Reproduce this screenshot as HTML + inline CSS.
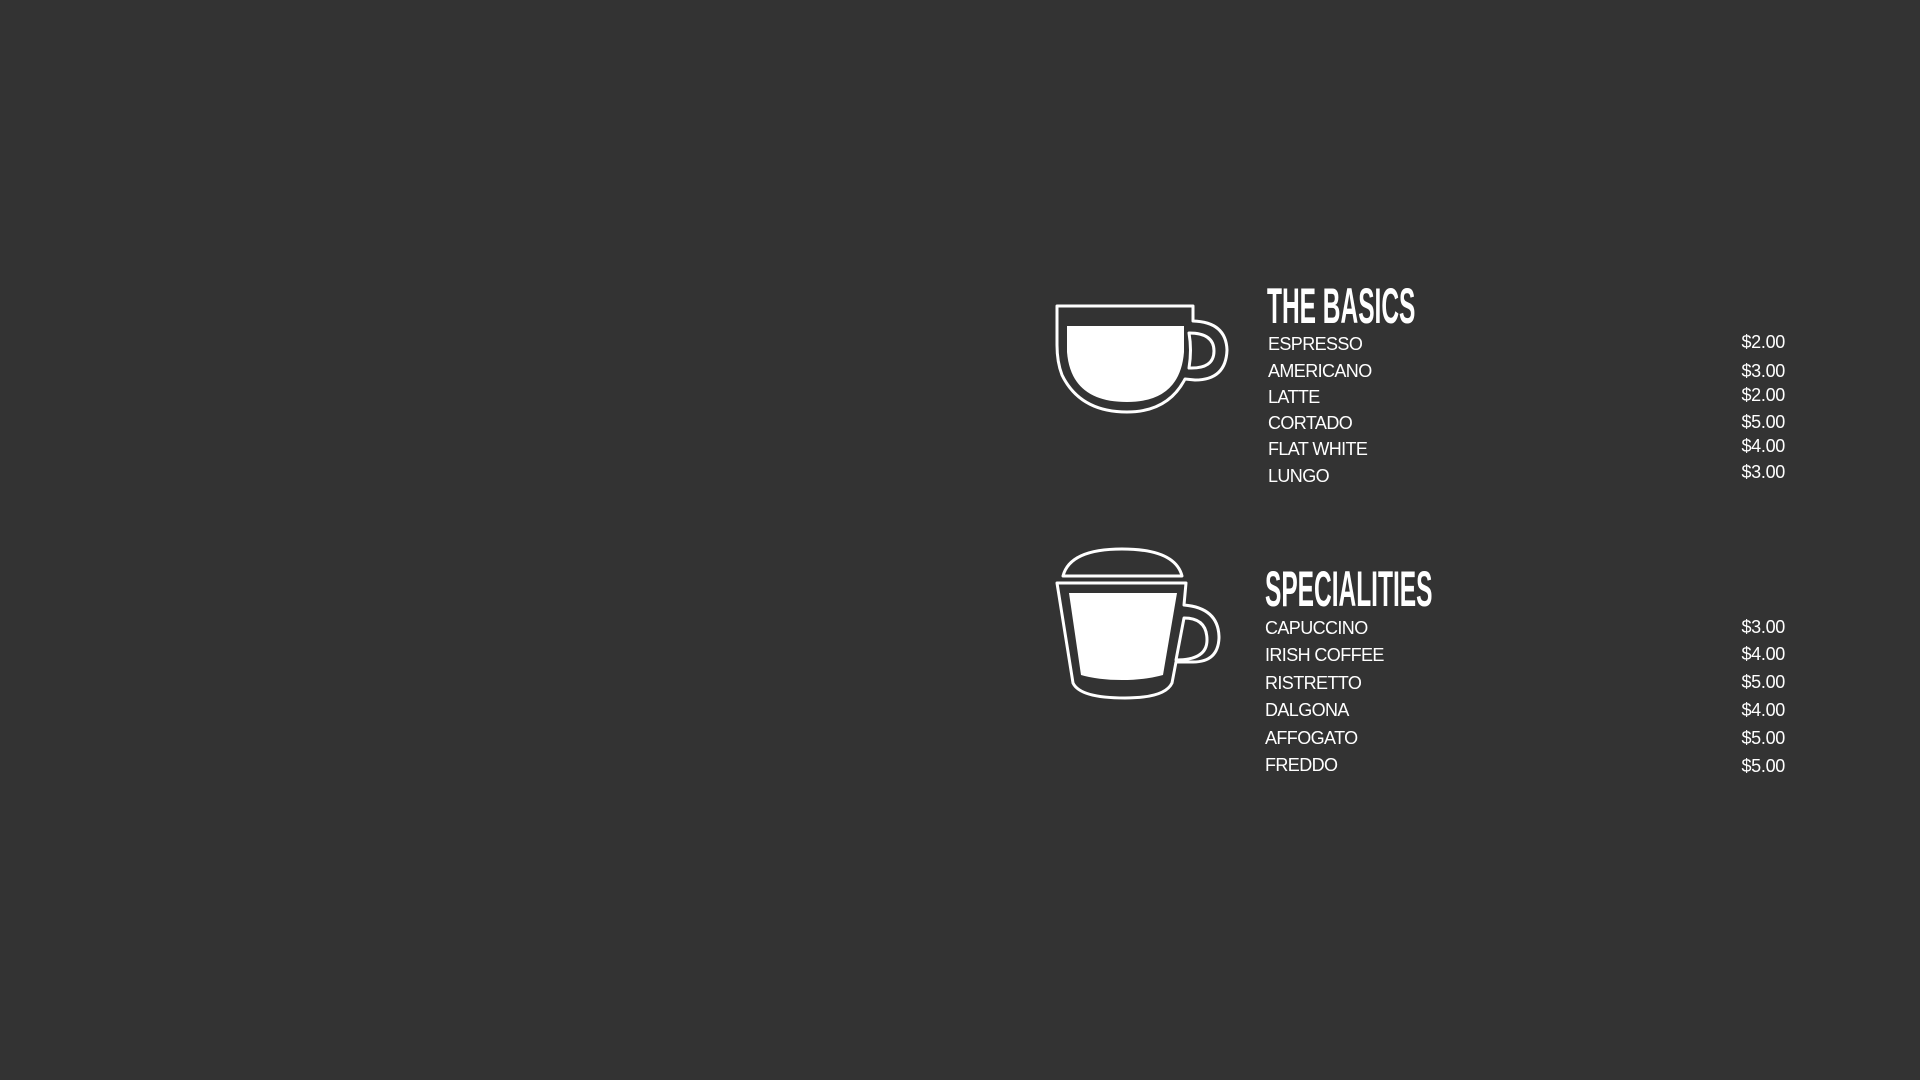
<!DOCTYPE html>
<html><head><meta charset="utf-8"><style>
html,body{margin:0;padding:0;background:#333;width:1920px;height:1080px;overflow:hidden}
.t{position:absolute;color:#fff;font-family:"Liberation Sans",sans-serif;white-space:nowrap}
.h{font-weight:bold;font-size:50px;line-height:50px;transform:scaleX(0.49);transform-origin:left top;letter-spacing:0}
.i{font-size:18px;line-height:20px;letter-spacing:-0.6px}
.p{font-size:18px;line-height:20px;right:135px;letter-spacing:-0.3px}
</style></head><body>
<svg width="1920" height="1080" style="position:absolute;left:0;top:0">
<g fill="none" stroke="#fff" stroke-width="3" stroke-linejoin="round">
<path d="M1057 306 L1193 306 L1193 321 Q1226 322 1227 350 Q1226 380 1195 380 L1185 379 Q1168 412 1127 412 Q1080 412 1062 375 Q1057 362 1057 345 Z"/>
<path d="M1189 333 Q1214 333 1214 351 Q1214 369 1189 368 Q1192 350 1189 333 Z"/>
<path d="M1063 576 Q1070 549 1122 549 Q1175 549 1182 576 Z"/>
<path d="M1057 583 L1186 583 L1184 605 Q1219 608 1219 638 Q1218 662 1193 662 L1176 662 L1172 683 Q1165 698 1125 698 Q1080 698 1073 683 Z"/>
<path d="M1184 618 Q1207 618 1207 640 Q1207 660 1176 660 Z"/>
</g>
<g fill="#fff">
<path d="M1067 326 L1184 326 L1184 352 Q1180 402 1127 402 Q1071 402 1067 352 Z"/>
<path d="M1069 593 L1177 593 L1163 675 Q1145 680 1122 680 Q1098 680 1081 675 Z"/>
</g>
</svg>
<div class="t h" style="left:1267px;top:281px">THE BASICS</div>
<div class="t i" style="left:1268px;top:334px">ESPRESSO</div>
<div class="t i" style="left:1268px;top:361px">AMERICANO</div>
<div class="t i" style="left:1268px;top:387px">LATTE</div>
<div class="t i" style="left:1268px;top:413px">CORTADO</div>
<div class="t i" style="left:1268px;top:439px">FLAT WHITE</div>
<div class="t i" style="left:1268px;top:466px">LUNGO</div>
<div class="t p" style="top:332px">$2.00</div>
<div class="t p" style="top:361px">$3.00</div>
<div class="t p" style="top:385px">$2.00</div>
<div class="t p" style="top:412px">$5.00</div>
<div class="t p" style="top:436px">$4.00</div>
<div class="t p" style="top:462px">$3.00</div>
<div class="t h" style="left:1265px;top:564px">SPECIALITIES</div>
<div class="t i" style="left:1265px;top:618px">CAPUCCINO</div>
<div class="t i" style="left:1265px;top:645px">IRISH COFFEE</div>
<div class="t i" style="left:1265px;top:673px">RISTRETTO</div>
<div class="t i" style="left:1265px;top:700px">DALGONA</div>
<div class="t i" style="left:1265px;top:728px">AFFOGATO</div>
<div class="t i" style="left:1265px;top:755px">FREDDO</div>
<div class="t p" style="top:617px">$3.00</div>
<div class="t p" style="top:644px">$4.00</div>
<div class="t p" style="top:672px">$5.00</div>
<div class="t p" style="top:700px">$4.00</div>
<div class="t p" style="top:728px">$5.00</div>
<div class="t p" style="top:756px">$5.00</div>
</body></html>
